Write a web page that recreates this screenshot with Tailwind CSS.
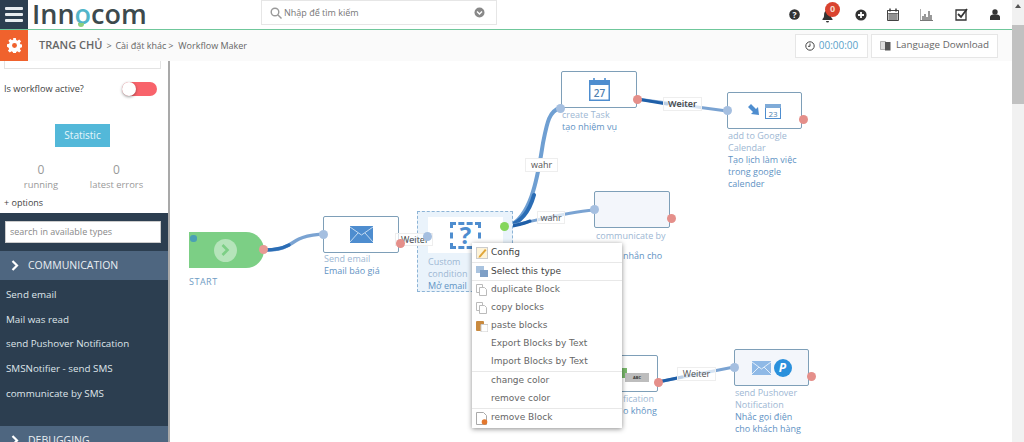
<!DOCTYPE html>
<html><head><meta charset="utf-8"><script src="https://cdn.jsdelivr.net/npm/@tailwindcss/browser@4"></script></head>
<body class="overflow-hidden bg-white">
<div class="relative flex h-[442px] w-[1024px] overflow-hidden font-['Open_Sans',sans-serif] text-[9px] text-[#555]">
<div class="flex h-full w-[1012px] flex-col">
  <!-- top bar -->
  <header class="flex h-[30px] shrink-0 items-stretch border-b border-[#6fc79b] bg-white">
    <div class="flex w-[28px] flex-col items-center justify-center gap-[3px] bg-[#2c3e50]">
      <span class="h-[3px] w-[18px] rounded-[1px] bg-[#e8edf1]"></span><span class="h-[3px] w-[18px] rounded-[1px] bg-[#e8edf1]"></span><span class="h-[3px] w-[18px] rounded-[1px] bg-[#e8edf1]"></span>
    </div>
    <div class="relative ml-[4px] w-[229px] text-[27px] font-semibold leading-[28px] text-[#3d4a4d]">Inn<span class="text-[#52b5c9]">o</span>com<span class="absolute left-[46px] top-[23px] h-[4px] w-[6px] rounded-b-[3px] bg-[#8ccf7e]"></span></div>
    <div class="mb-[4px] flex w-[236px] items-center border border-[#e6e6e6] pl-[8px]">
      <svg width="12" height="12" viewBox="0 0 12 12" class="mr-[2px]" fill="none" stroke="#999" stroke-width="1.4"><circle cx="5" cy="5" r="3.8"/><path d="M8 8l3.5 3.5"/></svg>
      <span class="flex-1 text-[#777]">Nhập để tìm kiếm</span>
      <svg width="11" height="11" viewBox="0 0 11 11" class="mr-[11px]"><circle cx="5.5" cy="5.5" r="5" fill="#888"/><path d="M3 4.5l2.5 2.5 2.5-2.5" stroke="#fff" stroke-width="1.4" fill="none"/></svg>
    </div>
    <div class="ml-auto flex items-center">
      <svg width="11" height="11" viewBox="0 0 11 11" class="mr-[21px]"><circle cx="5.5" cy="5.5" r="5.3" fill="#333"/><text x="5.5" y="8.6" font-size="8.5" font-weight="700" text-anchor="middle" fill="#fff" font-family="Open Sans">?</text></svg>
      <div class="relative mr-[21px] h-[14px] w-[13px]">
        <svg width="11" height="13" viewBox="0 0 11 13" class="absolute left-[1px] top-[2px]"><path d="M5.5 0.5c2.4 0 3.4 1.8 3.4 4 0 2.5.6 3.7 1.6 4.6v1H.5v-1c1-.9 1.6-2.1 1.6-4.6 0-2.2 1-4 3.4-4zM4 11h3a1.5 1.5 0 0 1-3 0z" fill="#333"/></svg>
        <span class="absolute left-[4px] top-[-6px] flex h-[15px] w-[15px] items-center justify-center rounded-full bg-[#d9432f] text-[9px] font-bold text-[#f5d6c8]">0</span>
      </div>
      <svg width="12" height="12" viewBox="0 0 12 12" class="mr-[20px]"><circle cx="6" cy="6" r="5.6" fill="#333"/><path d="M6 3v6M3 6h6" stroke="#fff" stroke-width="1.8"/></svg>
      <svg width="12" height="13" viewBox="0 0 12 13" class="mr-[21px]"><path d="M.5 2.5h11v10H.5z" fill="#fff" stroke="#444"/><path d="M.5 2.5h11v3H.5zM1 7h10M1 9h10M1 11h10M3 5v8M5 5v8M7 5v8M9 5v8" fill="none" stroke="#444" stroke-width=".7"/><path d="M3 .5v3M9 .5v3" stroke="#333" stroke-width="1.4"/></svg>
      <svg width="13" height="12" viewBox="0 0 13 12" class="mr-[22px]"><path d="M0 11.5H13" fill="none" stroke="#555" stroke-width=".8"/><path d="M.5 0v11.5" stroke="#777" stroke-width=".6"/><path d="M3 7v4M5 5v6M7 8v3M9 2v9M11 6v5" stroke="#555" stroke-width="1.2"/></svg>
      <svg width="13" height="13" viewBox="0 0 13 13" class="mr-[22px]"><path d="M1 2h10v10H1z" fill="none" stroke="#333" stroke-width="1.3"/><path d="M3 6l3 3 6-8" fill="none" stroke="#333" stroke-width="1.8"/></svg>
      <svg width="10" height="11" viewBox="0 0 10 11" class="mr-[12px]"><circle cx="5" cy="3" r="2.7" fill="#333"/><path d="M0 11V8c0-1.5 1.5-2.4 3-2.4h4c1.5 0 3 .9 3 2.4v3z" fill="#333"/></svg>
    </div>
  </header>
  <!-- breadcrumb -->
  <div class="flex h-[31px] shrink-0 items-center bg-[#fafafa] text-[#666]">
    <div class="flex h-full w-[28px] items-center justify-center bg-[#f0622d]">
      <svg width="15" height="15" viewBox="0 0 16 16"><path d="M6.6 0h2.8l.4 2.2 1.3.6 1.9-1.3 2 2-1.3 1.9.6 1.3 2.2.4v2.8l-2.2.4-.6 1.3 1.3 1.9-2 2-1.9-1.3-1.3.6-.4 2.2H6.6l-.4-2.2-1.3-.6-1.9 1.3-2-2 1.3-1.9-.6-1.3L0 9.4V6.6l2.2-.4.6-1.3-1.3-1.9 2-2 1.9 1.3 1.3-.6z" fill="#fff"/><circle cx="8" cy="8" r="2.6" fill="#f0622d"/></svg>
    </div>
    <span class="ml-[11px] text-[11px] font-semibold">TRANG CHỦ</span>
    <span class="ml-[4px] w-[9px]">&gt;</span>
    <span class="whitespace-nowrap">Cài đặt khác</span>
    <span class="ml-[2px] w-[10px]">&gt;</span>
    <span class="whitespace-nowrap">Workflow Maker</span>
    <div class="ml-auto flex h-[24px] w-[73px] items-center justify-center gap-[4px] border border-[#e6e6e6] bg-white text-[10px] text-[#5a9fc9]">
      <svg width="10" height="10" viewBox="0 0 10 10" fill="none" stroke="#444"><circle cx="5" cy="5" r="4.2"/><path d="M5 2.5V5.3H3"/></svg>00:00:00
    </div>
    <div class="ml-[3px] mr-[14px] flex h-[24px] w-[127px] items-center justify-center gap-[5px] border border-[#e6e6e6] bg-white text-[9.8px]">
      <svg width="11" height="11" viewBox="0 0 11 11"><path d="M.5 1.5h5v8h-5z" fill="#ddd" stroke="#888" stroke-width=".6"/><path d="M5 2h5.5v8.5H5z" fill="#555"/></svg>Language Download
    </div>
  </div>
  <div class="flex min-h-0 flex-1">
    <!-- sidebar -->
    <aside class="flex w-[170px] shrink-0 flex-col overflow-hidden border-r-2 border-[#a9a9a9]">
      <div class="h-[152px] shrink-0 bg-white">
        <div class="ml-[4px] h-[8px] w-[157px] border-x border-b border-[#e3e3e3]"></div>
        <div class="mt-[12px] flex h-[15px] items-center justify-between pl-[4px] pr-[11px] text-[9.2px] text-[#444]">
          <span>Is workflow active?</span>
          <span class="relative h-[14px] w-[35px] rounded-full bg-[#f8636b]"><span class="absolute left-0 top-0 h-[14px] w-[14px] rounded-full bg-white shadow-[0_1px_3px_rgba(0,0,0,.4)]"></span></span>
        </div>
        <div class="mt-[28px] flex justify-center pr-[3px]"><span class="flex h-[23px] w-[55px] items-center justify-center bg-[#53b8d9] text-[10px] text-[#e6f6fb]">Statistic</span></div>
        <div class="mt-[15px] flex text-center text-[9.4px] text-[#999]">
          <div class="w-[81px] pl-[1px]"><div class="text-[12px] leading-[16px]">0</div><div class="leading-[13px]">running</div></div>
          <div class="w-[71px]"><div class="text-[12px] leading-[16px]">0</div><div class="leading-[13px]">latest errors</div></div>
        </div>
        <div class="mt-[5px] pl-[4px] leading-[13px] text-[#444]">+ options</div>
      </div>
      <div class="flex flex-1 flex-col bg-[#2c3e50]">
        <div class="px-[5px] pt-[8px]"><div class="flex h-[22px] w-[156px] items-center border border-[#ccc] bg-white pl-[4px] text-[#888]">search in available types</div></div>
        <div class="mt-[8px] flex h-[29px] items-center bg-[#4e6680] pl-[11px] text-[10.5px] text-[#eaeff3]">
          <svg width="8" height="11" viewBox="0 0 8 11" class="mr-[9px]" fill="none" stroke="#fff" stroke-width="2.2"><path d="M1.5 1l4.5 4.5L1.5 10"/></svg>COMMUNICATION
        </div>
        <ul class="mt-[3px] text-[9.8px] text-[#dfe5ea]">
          <li class="flex h-[24.7px] items-center pl-[6px]">Send email</li>
          <li class="flex h-[24.7px] items-center pl-[6px]">Mail was read</li>
          <li class="flex h-[24.7px] items-center pl-[6px]">send Pushover Notification</li>
          <li class="flex h-[24.7px] items-center pl-[6px]">SMSNotifier - send SMS</li>
          <li class="flex h-[24.7px] items-center pl-[6px]">communicate by SMS</li>
        </ul>
        <div class="mt-[20px] flex h-[29px] shrink-0 items-center bg-[#4e6680] pl-[11px] text-[10.5px] text-[#eaeff3]">
          <svg width="8" height="11" viewBox="0 0 8 11" class="mr-[9px]" fill="none" stroke="#fff" stroke-width="2.2"><path d="M1.5 1l4.5 4.5L1.5 10"/></svg>DEBUGGING
        </div>
      </div>
    </aside>
    <main class="flex-1 bg-white"></main>
  </div>
</div>
<!-- scrollbar -->
<div class="flex w-[12px] flex-col items-center bg-[#f1f1f1]">
  <svg width="6" height="4" viewBox="0 0 6 4" class="mt-[4px]"><path d="M3 0l3 4H0z" fill="#555"/></svg>
  <div class="mt-[17px] h-[79px] w-full bg-[#c1c1c1]"></div>
</div>

<!-- workflow canvas -->
<svg class="absolute left-0 top-0" width="1012" height="442" fill="none" stroke-linecap="round">
  <path d="M265 250c22 0 24-6 34-11 8-4 14-4 24-5" stroke="#7aa3d2" stroke-width="3.5"/>
  <path d="M265 250c10 0 18-2 24-5" stroke="#2b6db5" stroke-width="3.5"/>
  <path d="M400 242L427 237" stroke="#9dbbdc" stroke-width="3"/>
  <path d="M505 227c28-6 34-60 38-84 4-20 6-32 17-35" stroke="#6f9fd2" stroke-width="4"/>
  <path d="M505 227c14-3 24-14 29-32" stroke="#2b6db5" stroke-width="4"/>
  <path d="M505 227c30-6 60-15 89-17" stroke="#7aa3d2" stroke-width="3"/>
  <path d="M505 227c10-1 18-3 25-6" stroke="#1f5fa8" stroke-width="3"/>
  <path d="M637 99l90 12" stroke="#7aa3d2" stroke-width="3"/>
  <path d="M637 99l30 5" stroke="#1f5fa8" stroke-width="3"/>
  <path d="M658 382l76-15" stroke="#7aa3d2" stroke-width="3"/>
  <path d="M658 382l24-5" stroke="#1f5fa8" stroke-width="3"/>
</svg>
<div class="absolute left-[189px] top-[232px] flex h-[36px] w-[75px] items-center justify-center rounded-r-[22px] bg-[#7ccf85] pr-[2px]">
  <span class="absolute left-[1px] top-[3px] h-[7px] w-[7px] rounded-[3px] bg-[#4aa0b5]"></span>
  <span class="flex h-[23px] w-[23px] items-center justify-center rounded-full bg-[#b5e4ba]"><svg width="9" height="12" viewBox="0 0 9 12" fill="none" stroke="#7ccf85" stroke-width="2.6"><path d="M1.5 1l5 5-5 5"/></svg></span>
</div>
<div class="absolute left-[189px] top-[275px] tracking-[0.5px] text-[#6f9cc4]">START</div>

<!-- Send email -->
<div class="absolute left-[323px] top-[216px] flex h-[37px] w-[76px] items-center justify-center rounded-[2px] border border-[#7e9fb8] bg-white">
  <svg width="23" height="17" viewBox="0 0 23 17"><rect width="23" height="17" fill="#4e8dcf"/><path d="M0 1l11.5 8L23 1M0 16l8-9M23 16l-8-9" stroke="#cfe2f5" fill="none" stroke-width=".9"/></svg>
</div>
<div class="absolute left-[324px] top-[253px] w-[80px] leading-[12px]"><div class="text-[#9db7d3]">Send email</div><div class="text-[#5f93c4]">Email báo giá</div></div>

<!-- Custom condition (selected) -->
<div class="absolute left-[417px] top-[211px] h-[81px] w-[96px] border border-dashed border-[#8db4d6] bg-[#eaf3fb]">
  <div class="absolute left-[10px] top-[5px] flex h-[36px] w-[75px] items-center justify-center bg-white">
    <div class="flex h-[27px] w-[31px] items-center justify-center border-[3px] border-dashed border-[#4e8dcf] text-[24px] font-bold leading-none text-[#4e8dcf]">?</div>
  </div>
  <div class="absolute left-[10px] top-[44px] w-[60px] leading-[12px]"><div class="text-[#9db7d3]">Custom</div><div class="text-[#9db7d3]">condition</div><div class="text-[#5f93c4]">Mở email</div></div>
</div>

<!-- create Task -->
<div class="absolute left-[561px] top-[71px] flex h-[37px] w-[76px] items-center justify-center rounded-[2px] border border-[#7e9fb8] bg-white">
  <svg width="21" height="23" viewBox="0 0 21 23"><rect x=".75" y="2.75" width="19.5" height="19.5" fill="#fff" stroke="#4e8dcf" stroke-width="1.5"/><rect y="2" width="21" height="5" fill="#4e8dcf"/><path d="M5 0v5M16 0v5" stroke="#4e8dcf" stroke-width="1.6"/><text x="10.5" y="19" font-size="10" font-weight="600" text-anchor="middle" fill="#4e80b0" font-family="Open Sans">27</text></svg>
</div>
<div class="absolute left-[562px] top-[109px] leading-[12px]"><div class="text-[#9db7d3]">create Task</div><div class="text-[#5f93c4]">tạo nhiệm vụ</div></div>

<!-- Google Calendar -->
<div class="absolute left-[727px] top-[92px] flex h-[37px] w-[75px] items-center justify-center gap-[2px] rounded-[2px] border border-[#7e9fb8] bg-white">
  <svg width="15" height="13" viewBox="0 0 15 13"><path d="M0 3l3-3 5 5 2-2 1 8-8-1 2-2z" fill="#4e8dcf"/></svg>
  <svg width="16" height="16" viewBox="0 0 16 16"><rect x=".5" y="1.5" width="15" height="14" fill="#fff" stroke="#4e8dcf"/><rect y="1" width="16" height="4" fill="#7fabd8"/><text x="8" y="14" font-size="8" text-anchor="middle" fill="#4e80b0" font-family="Open Sans">23</text></svg>
</div>
<div class="absolute left-[728px] top-[130px] w-[78px] leading-[12px]"><div class="text-[#9db7d3]">add to Google Calendar</div><div class="text-[#5f93c4]">Tạo lịch làm việc trong google calender</div></div>

<!-- communicate by -->
<div class="absolute left-[594px] top-[191px] h-[37px] w-[76px] rounded-[2px] border border-[#7e9fb8] bg-[#f3f6fb]"></div>
<div class="absolute left-[596px] top-[230px] leading-[12px] text-[#9db7d3]">communicate by</div>
<div class="absolute left-[623px] top-[250px] leading-[12px] text-[#5f93c4]">nhắn cho</div>

<!-- Notification -->
<div class="absolute left-[581px] top-[355px] h-[37px] w-[77px] rounded-[2px] border border-[#7e9fb8] bg-white">
  <span class="absolute left-[36px] top-[12px] h-[10px] w-[9px] bg-[#79b96b]"></span>
  <span class="absolute left-[43px] top-[17px] flex h-[9px] w-[24px] items-center justify-center bg-[#bdbdbd] text-[4px] font-bold text-[#333]">ABC</span>
</div>
<div class="absolute left-[623px] top-[393px] w-[40px] whitespace-nowrap leading-[12px]"><div class="text-[#9db7d3]">fication</div><div class="text-[#5f93c4]">o không</div></div>

<!-- Pushover -->
<div class="absolute left-[734px] top-[349px] flex h-[37px] w-[75px] items-center justify-center gap-[3px] rounded-[2px] border border-[#7e9fb8] bg-[#f3f6fb]">
  <svg width="19" height="14" viewBox="0 0 19 14"><rect width="19" height="14" fill="#8fb9e6"/><path d="M0 1l9.5 7L19 1M0 13l7-7M19 13l-7-7" stroke="#e2eefa" fill="none"/></svg>
  <span class="flex h-[18px] w-[18px] items-center justify-center rounded-full bg-[#2a90dc] text-[12px] font-bold italic leading-none text-white">P</span>
</div>
<div class="absolute left-[735px] top-[387px] w-[70px] leading-[12px]"><div class="text-[#9db7d3]">send Pushover Notification</div><div class="text-[#5f93c4]">Nhắc gọi điện cho khách hàng</div></div>

<!-- labels -->
<div class="absolute left-[525px] top-[158px] flex h-[14px] w-[33px] items-center justify-center border border-[#eee] bg-white text-[#555]">wahr</div>
<div class="absolute left-[537px] top-[211px] flex h-[13px] w-[28px] items-center justify-center border border-[#eee] bg-white/70 text-[#555]">wahr</div>
<div class="absolute left-[395px] top-[233px] flex h-[13px] w-[38px] items-center overflow-hidden border border-[#eee] bg-white/70 pl-[5px] text-[#444]">Weiter</div>
<div class="absolute left-[663px] top-[97px] flex h-[14px] w-[39px] items-center justify-center border border-[#eee] bg-white/70 font-semibold text-[#444]">Weiter</div>
<div class="absolute left-[677px] top-[367px] flex h-[14px] w-[39px] items-center justify-center border border-[#eee] bg-white/70 text-[#555]">Weiter</div>

<!-- ports -->
<span class="absolute left-[259px] top-[245px] h-[9px] w-[9px] rounded-full bg-[#e79a94]"></span>
<span class="absolute left-[319px] top-[230px] h-[9px] w-[9px] rounded-full bg-[#a5bfe0]"></span>
<span class="absolute left-[396px] top-[239px] h-[9px] w-[9px] rounded-full bg-[#e58f8a]"></span>
<span class="absolute left-[423px] top-[232px] h-[9px] w-[9px] rounded-full bg-[#a5bfe0]"></span>
<span class="absolute left-[500px] top-[222px] h-[9px] w-[9px] rounded-full bg-[#84d65c]"></span>
<span class="absolute left-[556px] top-[104px] h-[9px] w-[9px] rounded-full bg-[#a5bfe0]"></span>
<span class="absolute left-[633px] top-[95px] h-[9px] w-[9px] rounded-full bg-[#e58f8a]"></span>
<span class="absolute left-[723px] top-[106px] h-[9px] w-[9px] rounded-full bg-[#a5bfe0]"></span>
<span class="absolute left-[799px] top-[115px] h-[9px] w-[9px] rounded-full bg-[#e58f8a]"></span>
<span class="absolute left-[590px] top-[205px] h-[9px] w-[9px] rounded-full bg-[#a5bfe0]"></span>
<span class="absolute left-[667px] top-[214px] h-[9px] w-[9px] rounded-full bg-[#e58f8a]"></span>
<span class="absolute left-[654px] top-[378px] h-[9px] w-[9px] rounded-full bg-[#e58f8a]"></span>
<span class="absolute left-[730px] top-[363px] h-[9px] w-[9px] rounded-full bg-[#a5bfe0]"></span>
<span class="absolute left-[807px] top-[372px] h-[9px] w-[9px] rounded-full bg-[#e58f8a]"></span>

<!-- context menu -->
<div class="absolute left-[472px] top-[243px] w-[150px] bg-white py-[1px] font-['DejaVu_Sans',sans-serif] text-[9px] text-[#666] shadow-[0_1px_5px_rgba(0,0,0,.45)]">
  <div class="flex h-[18px] items-center pl-[4px] text-[#444]"><svg width="12" height="12" viewBox="0 0 12 12" class="mr-[3px]"><rect x=".5" y=".5" width="11" height="11" fill="#fdf3d8" stroke="#ccc"/><path d="M3 9l6-7 1.5 1.2-6 7-2 .5z" fill="#e0a63a"/></svg>Config</div>
  <div class="flex h-[19px] items-center border-y border-[#e8e8e8] pl-[4px] text-[#444]"><svg width="12" height="12" viewBox="0 0 12 12" class="mr-[3px]"><rect width="8" height="7" fill="#a9c3df"/><rect x="4" y="4" width="8" height="7" fill="#7e9fc6"/></svg>Select this type</div>
  <div class="flex h-[18px] items-center pl-[4px]"><svg width="12" height="12" viewBox="0 0 12 12" class="mr-[3px]" fill="#fff" stroke="#bbb"><path d="M.5.5h6v8h-6z"/><path d="M3.5 3.5h5l2 2v6h-7z"/></svg>duplicate Block</div>
  <div class="flex h-[18px] items-center pl-[4px]"><svg width="12" height="12" viewBox="0 0 12 12" class="mr-[3px]" fill="#fff" stroke="#bbb"><path d="M.5.5h6v8h-6z"/><path d="M3.5 3.5h5l2 2v6h-7z"/></svg>copy blocks</div>
  <div class="flex h-[18px] items-center pl-[4px]"><svg width="12" height="12" viewBox="0 0 12 12" class="mr-[3px]"><rect y="1" width="8" height="10" rx="1" fill="#c98a3f"/><path d="M5 4.5h7v7.5H5z" fill="#fff" stroke="#ccc"/></svg>paste blocks</div>
  <div class="flex h-[18px] items-center pl-[19px]">Export Blocks by Text</div>
  <div class="flex h-[18px] items-center pl-[19px]">Import Blocks by Text</div>
  <div class="flex h-[19px] items-center border-t border-[#e8e8e8] pl-[19px]">change color</div>
  <div class="flex h-[18px] items-center pl-[19px]">remove color</div>
  <div class="flex h-[19px] items-center border-t border-[#e8e8e8] pl-[4px]"><svg width="12" height="13" viewBox="0 0 12 13" class="mr-[3px]"><path d="M.5.5h7l3 3v9H.5z" fill="#fff" stroke="#aaa"/><circle cx="8.5" cy="10" r="2.8" fill="#e2772d"/></svg>remove Block</div>
</div>
</div>
</body></html>
